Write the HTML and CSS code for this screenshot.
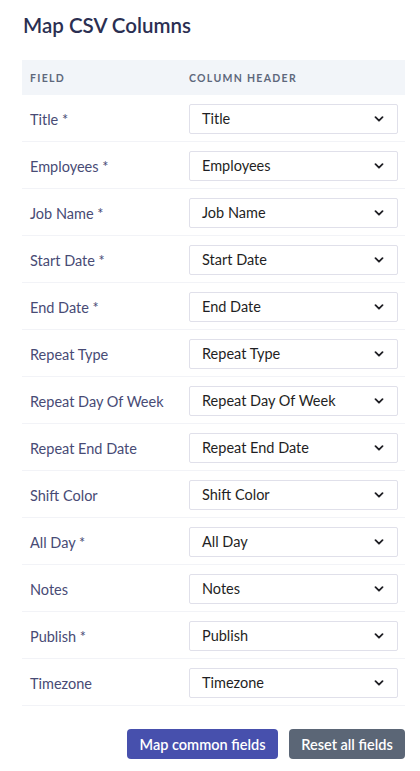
FILE: index.html
```html
<!DOCTYPE html>
<html>
<head>
<meta charset="utf-8">
<link rel="stylesheet" href="styles.css">
</head>
<body>
<div class="page">
  <h1 class="title">Map CSV Columns</h1>
  <div class="table">
    <div class="thead">
      <div class="th c1">FIELD</div>
      <div class="th c2">COLUMN HEADER</div>
    </div>
    <div class="row"><div class="label">Title *</div><div class="select"><span>Title</span><svg viewBox="0 0 10 6" class="chev"><path d="M1.5 1.2l3.5 3.5 3.5-3.5"/></svg></div></div>
    <div class="row"><div class="label">Employees *</div><div class="select"><span>Employees</span><svg viewBox="0 0 10 6" class="chev"><path d="M1.5 1.2l3.5 3.5 3.5-3.5"/></svg></div></div>
    <div class="row"><div class="label">Job Name *</div><div class="select"><span>Job Name</span><svg viewBox="0 0 10 6" class="chev"><path d="M1.5 1.2l3.5 3.5 3.5-3.5"/></svg></div></div>
    <div class="row"><div class="label">Start Date *</div><div class="select"><span>Start Date</span><svg viewBox="0 0 10 6" class="chev"><path d="M1.5 1.2l3.5 3.5 3.5-3.5"/></svg></div></div>
    <div class="row"><div class="label">End Date *</div><div class="select"><span>End Date</span><svg viewBox="0 0 10 6" class="chev"><path d="M1.5 1.2l3.5 3.5 3.5-3.5"/></svg></div></div>
    <div class="row"><div class="label">Repeat Type</div><div class="select"><span>Repeat Type</span><svg viewBox="0 0 10 6" class="chev"><path d="M1.5 1.2l3.5 3.5 3.5-3.5"/></svg></div></div>
    <div class="row"><div class="label">Repeat Day Of Week</div><div class="select"><span>Repeat Day Of Week</span><svg viewBox="0 0 10 6" class="chev"><path d="M1.5 1.2l3.5 3.5 3.5-3.5"/></svg></div></div>
    <div class="row"><div class="label">Repeat End Date</div><div class="select"><span>Repeat End Date</span><svg viewBox="0 0 10 6" class="chev"><path d="M1.5 1.2l3.5 3.5 3.5-3.5"/></svg></div></div>
    <div class="row"><div class="label">Shift Color</div><div class="select"><span>Shift Color</span><svg viewBox="0 0 10 6" class="chev"><path d="M1.5 1.2l3.5 3.5 3.5-3.5"/></svg></div></div>
    <div class="row"><div class="label">All Day *</div><div class="select"><span>All Day</span><svg viewBox="0 0 10 6" class="chev"><path d="M1.5 1.2l3.5 3.5 3.5-3.5"/></svg></div></div>
    <div class="row"><div class="label">Notes</div><div class="select"><span>Notes</span><svg viewBox="0 0 10 6" class="chev"><path d="M1.5 1.2l3.5 3.5 3.5-3.5"/></svg></div></div>
    <div class="row"><div class="label">Publish *</div><div class="select"><span>Publish</span><svg viewBox="0 0 10 6" class="chev"><path d="M1.5 1.2l3.5 3.5 3.5-3.5"/></svg></div></div>
    <div class="row"><div class="label">Timezone</div><div class="select"><span>Timezone</span><svg viewBox="0 0 10 6" class="chev"><path d="M1.5 1.2l3.5 3.5 3.5-3.5"/></svg></div></div>
  </div>
  <div class="actions">
    <button class="btn primary">Map common fields</button>
    <button class="btn secondary">Reset all fields</button>
  </div>
</div>
</body>
</html>
```
FILE: styles.css
```css
* { box-sizing: border-box; }
html, body { margin: 0; padding: 0; background: #fff; }
body { font-family: "Lato", "Open Sans", sans-serif; }
.page { padding: 12px 15px 0 22px; width: 420px; }
.title {
  margin: 0 0 0 1px;
  font-size: 20.5px;
  font-weight: 600;
  color: #2b2f52;
  line-height: 26px;
  height: 48px;
}
.table { width: 383px; }
.thead {
  display: flex;
  align-items: center;
  height: 35px;
  background: #f2f5f9;
}
.th {
  font-size: 10.5px;
  font-weight: 700;
  letter-spacing: 1.3px;
  color: #5e687c;
}
.c1 { width: 167px; padding-left: 8px; }
.c2 { flex: 1; }
.row {
  display: flex;
  align-items: center;
  height: 47px;
  border-bottom: 1px solid #f2f3f7;
  padding-top: 1px;
}
.label {
  width: 167px;
  padding-left: 8px;
  padding-top: 2px;
  font-size: 14.5px;
  color: #484b75;
}
.select {
  width: 209px;
  height: 30px;
  border: 1px solid #e0e0ea;
  border-radius: 2px;
  display: flex;
  align-items: center;
  justify-content: space-between;
  padding: 0 13px 0 12px;
  font-size: 14.5px;
  color: #1f1f24;
}
.chev { width: 10px; height: 6px; }
.chev path { fill: none; stroke: #1f1f24; stroke-width: 1.8; stroke-linecap: round; stroke-linejoin: round; }
.actions {
  display: flex;
  justify-content: flex-end;
  gap: 11px;
  margin-top: 23px;
}
.btn {
  border: none;
  border-radius: 4px;
  height: 30px;
  font-family: inherit;
  font-size: 14.5px;
  font-weight: 600;
  color: #fff;
  padding: 0;
}
.primary { width: 151px; background: #4750ad; }
.secondary { width: 116px; background: #5b6676; }
```
